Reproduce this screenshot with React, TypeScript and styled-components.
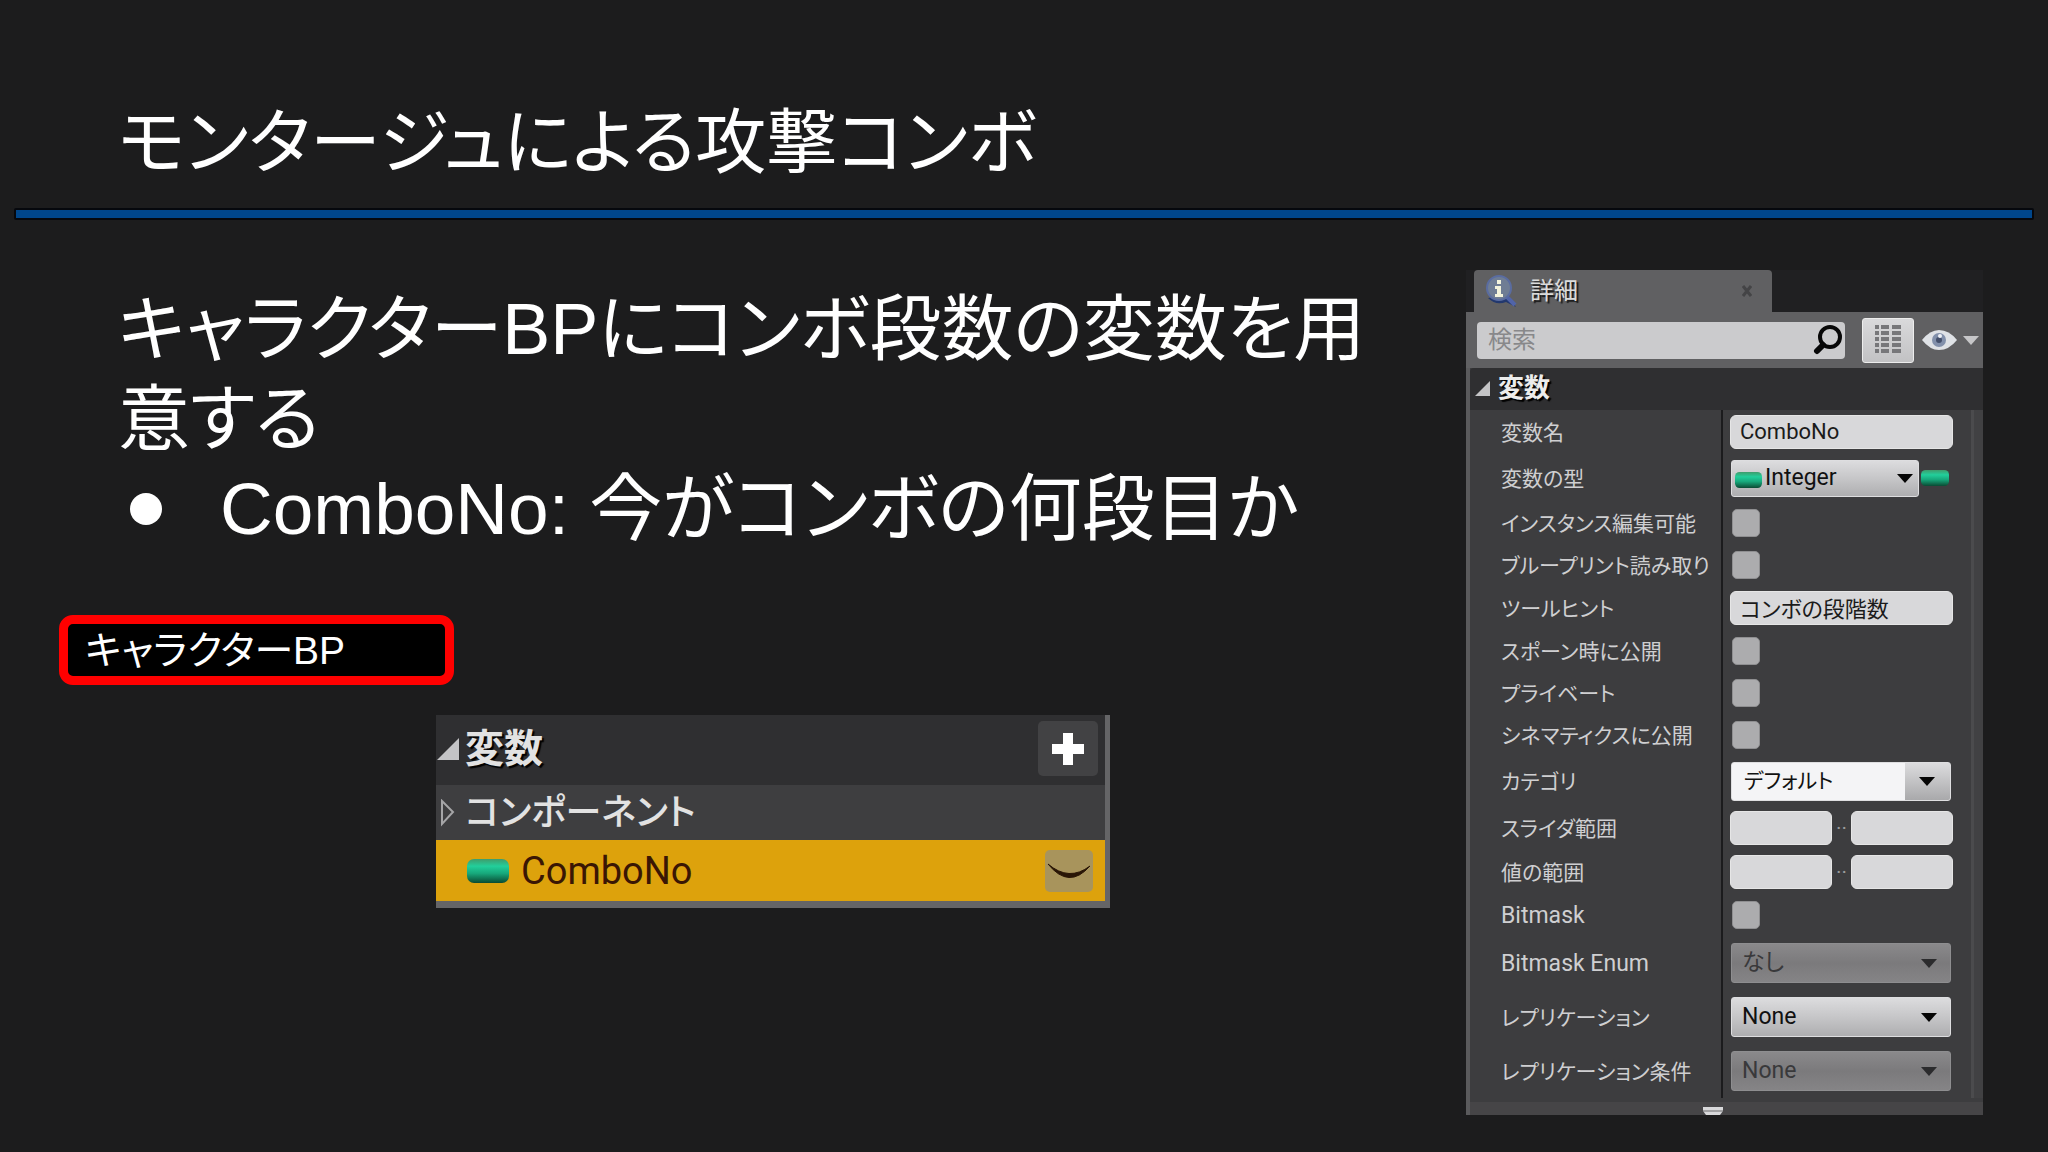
import React from "react";
import styled, { createGlobalStyle, css } from "styled-components";

const GlobalStyle = createGlobalStyle`
  *, *::before, *::after { box-sizing: border-box; }
  body {
    margin: 0;
    background: #1c1c1d;
    color: #fff;
    font-family: "Liberation Sans", "Noto Sans CJK JP", sans-serif;
    font-feature-settings: "palt";
  }
  input, select, button { font: inherit; font-feature-settings: inherit; margin: 0; }
`;

const editorFont = css`
  font-family: Roboto, "Noto Sans CJK JP", sans-serif;
`;

const Slide = styled.div`
  min-height: 100vh;
  display: flex;
  flex-direction: column;
`;

const Header = styled.header`
  padding: 88px 14px 0;
`;

const Title = styled.h1`
  margin: 0 0 10px;
  padding-left: 104px;
  font-size: 71px;
  line-height: 110px;
  font-weight: 400;
`;

const Rule = styled.hr`
  height: 12px;
  margin: 0;
  border: 2px solid #06080d;
  border-radius: 2px;
  background: #00468b;
`;

const Content = styled.main`
  display: grid;
  grid-template-columns: minmax(0, 1fr) 517px;
  align-items: start;
  padding: 50px 65px 0 0;
`;

const Story = styled.section`
  display: flex;
  flex-direction: column;
  align-items: flex-start;
  padding-top: 14px;
`;

const Body = styled.div`
  padding: 0 66px 0 118px;
  font-size: 72px;
  line-height: 90px;
`;

const Paragraph = styled.p`
  margin: 0;
`;

const Bullets = styled.ul`
  margin: 0;
  padding: 0;
  list-style: none;
  font-size: 73px;
`;

const Bullet = styled.li`
  display: flex;
  align-items: center;
  gap: 58px;
  padding-left: 12px;

  &::before {
    content: "";
    width: 32px;
    height: 32px;
    border-radius: 50%;
    background: #fff;
  }
`;

const Badge = styled.div`
  width: 395px;
  margin: 61px 0 30px 59px;
  padding: 1px 17px 0;
  border: 9px solid #f00;
  border-radius: 14px;
  background: #000;
  font-size: 39px;
  line-height: 51px;
`;

const VariableList = styled.section`
  ${editorFont}
  width: 674px;
  margin-left: 436px;
  border: solid #656567;
  border-width: 0 5px 7px 0;
`;

const ListRow = styled.div<{ $tone: "head" | "group" | "active" }>`
  display: flex;
  align-items: center;
  height: ${(p) => (p.$tone === "head" ? 70 : p.$tone === "group" ? 55 : 61)}px;
  padding-right: ${(p) => (p.$tone === "active" ? 12 : 7)}px;
  padding-bottom: ${(p) => (p.$tone === "head" ? 3 : 0)}px;
  padding-left: ${(p) => (p.$tone === "active" ? 31 : 1)}px;
  gap: ${(p) => (p.$tone === "active" ? 12 : 6)}px;
  background: ${(p) => (p.$tone === "head" ? "#2f2f31" : p.$tone === "group" ? "#3e3e40" : "#dda20c")};
  color: ${(p) => (p.$tone === "active" ? "#3a1604" : "#e2e2e2")};
  font-size: ${(p) => (p.$tone === "head" ? 39 : p.$tone === "group" ? 36 : 38)}px;
  font-weight: ${(p) => (p.$tone === "active" ? 400 : p.$tone === "head" ? 700 : 500)};
  line-height: 48px;
  text-shadow: ${(p) => (p.$tone === "head" ? "2px 2px 1px #000" : "none")};
`;

const RowText = styled.span`
  flex: 1;
`;

const ListButton = styled.button<{ $kind: "add" | "eye" }>`
  display: grid;
  place-items: center;
  padding: 0;
  border: 0;
  border-radius: 5px;
  width: ${(p) => (p.$kind === "add" ? 60 : 48)}px;
  height: ${(p) => (p.$kind === "add" ? 55 : 42)}px;
  background: ${(p) => (p.$kind === "add" ? "#424244" : "#a8945c")};
`;

const Details = styled.aside`
  ${editorFont}
  font-size: 21px;
  line-height: 28px;
`;

const TabBar = styled.div`
  padding-left: 8px;
  background: #202022;
`;

const Tab = styled.div`
  display: flex;
  align-items: center;
  width: 298px;
  height: 42px;
  padding: 0 20px 0 10px;
  gap: 12px;
  border-radius: 4px 4px 0 0;
  background: #606062;
  color: #dcdcdc;
  font-size: 24px;
  text-shadow: 2px 2px 1px #1a1a1a;
`;

const CloseButton = styled.button`
  display: grid;
  padding: 0;
  border: 0;
  background: none;
`;

const Toolbar = styled.div`
  display: flex;
  align-items: center;
  height: 56px;
  padding: 0 4px 0 11px;
  background: #606062;
`;

const SearchBox = styled.label`
  display: flex;
  align-items: center;
  flex: 1;
  height: 37px;
  margin-right: 17px;
  padding: 0 2px 0 11px;
  border-radius: 4px;
  background: #cbcbcd;
`;

const SearchInput = styled.input`
  flex: 1;
  min-width: 0;
  padding: 0;
  border: 0;
  outline: 0;
  background: none;
  font-size: 24px;
  line-height: 36px;
  color: #222;

  &::placeholder { color: #88888a; opacity: 1; }
`;

const GridButton = styled.button`
  display: grid;
  place-items: center;
  width: 52px;
  height: 45px;
  margin-right: 8px;
  padding: 0;
  border: 1px solid #ededed;
  border-radius: 3px;
  background: linear-gradient(#d9d9db, #c2c2c4);
`;

const ViewButton = styled.button`
  display: flex;
  align-items: center;
  gap: 6px;
  padding: 0;
  border: 0;
  background: none;
`;

const Pane = styled.div`
  border-left: 4px solid #5a5a5c;
  background: #3d3d3f;
`;

const SectionHead = styled.h2`
  display: flex;
  align-items: center;
  gap: 8px;
  height: 42px;
  margin: 0;
  padding: 0 0 2px 5px;
  border-radius: 4px 0 0 0;
  background: #2f2f31;
  color: #ececec;
  font-size: 26px;
  font-weight: 700;
  text-shadow: 2px 2px 1px #000;
`;

const Scroller = styled.div`
  border-right: 9px solid #414143;
  box-shadow: inset -3px 0 #4b4b4d;
`;

const Field = styled.div<{ $height: number }>`
  display: grid;
  grid-template-columns: 253px minmax(0, 1fr);
  height: ${(p) => p.$height}px;
`;

const FieldLabel = styled.label<{ $latin: boolean }>`
  display: flex;
  align-items: center;
  padding: 1px 0 0 31px;
  border-right: 2px solid #1b1b1d;
  color: #cfcfd1;
  font-size: ${(p) => (p.$latin ? 23 : 21)}px;
  white-space: nowrap;
  overflow: hidden;
`;

const Control = styled.div`
  display: flex;
  align-items: center;
  padding: 0 21px 0 7px;
`;

const TextBox = styled.input`
  flex: 1;
  width: 100%;
  min-width: 0;
  height: 34px;
  padding: 0 9px 2px;
  border: 1px solid #e6e6e6;
  border-radius: 6px;
  background: #d8d8da;
  color: #1b1b1b;
  font-size: 22px;
`;

const RangeGap = styled.span`
  width: 19px;
  color: #9b9b9d;
  line-height: 20px;
  text-align: center;
`;

const CheckBox = styled.input.attrs({ type: "checkbox" })`
  appearance: none;
  width: 28px;
  height: 28px;
  margin-left: 2px;
  border: 1px solid #8f8f91;
  border-radius: 5px;
  background: #acacae;
`;

const SelectWrap = styled.div<{ $width?: number }>`
  position: relative;
  flex: ${(p) => (p.$width ? "none" : "1")};
  width: ${(p) => (p.$width ? p.$width + "px" : "auto")};
  margin: 0 2px 0 1px;
`;

type Look = "plain" | "type" | "combo";

const Select = styled.select<{ $look: Look }>`
  appearance: none;
  display: block;
  width: 100%;
  height: ${(p) => (p.$look === "plain" ? 40 : p.$look === "combo" ? 39 : 37)}px;
  padding: 0 30px 0 ${(p) => (p.$look === "type" ? 33 : p.$look === "combo" ? 12 : 10)}px;
  border: 1px solid #dedee0;
  border-radius: 3px;
  color: #111;
  opacity: 1;
  font-size: ${(p) => (p.$look === "combo" ? 21 : 23)}px;
  background: ${(p) =>
    p.$look === "combo"
      ? "linear-gradient(90deg, #f4f4f6 173px, transparent 173px), linear-gradient(#dcdcde, #a9a9ab)"
      : "linear-gradient(#dcdcde, #c6c6c8 50%, #aeaeb0)"};

  &:disabled {
    border-color: #8e8e90;
    background: linear-gradient(#8a898b, #7b7a7c 50%, #858486);
    color: #39393b;
  }
`;

const SelectArrow = styled.svg<{ $right: number }>`
  position: absolute;
  right: ${(p) => p.$right}px;
  top: 50%;
  margin-top: -4px;
  pointer-events: none;
`;

const SelectPill = styled.span`
  position: absolute;
  left: 4px;
  top: 12px;
  display: grid;
  pointer-events: none;
`;

const Footer = styled.div`
  display: flex;
  align-items: flex-end;
  justify-content: center;
  height: 17px;
  padding-right: 27px;
  border-top: 4px solid #3d3d3f;
  background: #464547;
`;

function Pill({ width, height, id }: { width: number; height: number; id: string }) {
  return (
    <svg width={width} height={height} viewBox="0 0 42 24" preserveAspectRatio="none" aria-hidden="true">
      <defs>
        <linearGradient id={id} x1="0" y1="0" x2="0" y2="1">
          <stop offset="0" stopColor="#3f9c6c" />
          <stop offset="0.3" stopColor="#22cf9b" />
          <stop offset="0.6" stopColor="#17a87b" />
          <stop offset="1" stopColor="#0a4a33" />
        </linearGradient>
      </defs>
      <rect width="42" height="24" rx="7" fill={`url(#${id})`} />
    </svg>
  );
}

function Expanded({ size }: { size: number }) {
  return (
    <svg width={size} height={size} viewBox="0 0 20 20" aria-hidden="true">
      <path d="M20 0V20H0Z" fill="#c4c4c6" />
    </svg>
  );
}

function Dropdown({ look = "plain", value, id, disabled, width }: {
  look?: Look; value: string; id: string; disabled?: boolean; width?: number;
}) {
  return (
    <SelectWrap $width={width}>
      <Select id={id} $look={look} disabled={disabled} defaultValue={value}>
        <option>{value}</option>
      </Select>
      {look === "type" && <SelectPill><Pill width={27} height={16} id="typePill" /></SelectPill>}
      <SelectArrow $right={look === "type" ? 6 : look === "combo" ? 16 : 14} width="16" height="9" viewBox="0 0 16 9" aria-hidden="true">
        <path d="M0 0H16L8 9Z" fill={disabled ? "#2b2b2d" : "#050505"} />
      </SelectArrow>
    </SelectWrap>
  );
}

type Kind = "text" | "type" | "check" | "combo" | "range" | "select";
const rowHeight: Record<Kind, number> = { text: 44, type: 48, check: 42, combo: 50, range: 44, select: 54 };

const fields: { label: string; kind: Kind; value?: string; disabled?: boolean; latin?: boolean }[] = [
  { label: "変数名", kind: "text", value: "ComboNo" },
  { label: "変数の型", kind: "type", value: "Integer" },
  { label: "インスタンス編集可能", kind: "check" },
  { label: "ブループリント読み取り", kind: "check" },
  { label: "ツールヒント", kind: "text", value: "コンボの段階数" },
  { label: "スポーン時に公開", kind: "check" },
  { label: "プライベート", kind: "check" },
  { label: "シネマティクスに公開", kind: "check" },
  { label: "カテゴリ", kind: "combo", value: "デフォルト" },
  { label: "スライダ範囲", kind: "range" },
  { label: "値の範囲", kind: "range" },
  { label: "Bitmask", kind: "check", latin: true },
  { label: "Bitmask Enum", kind: "select", value: "なし", disabled: true, latin: true },
  { label: "レプリケーション", kind: "select", value: "None" },
  { label: "レプリケーション条件", kind: "select", value: "None", disabled: true },
];

export default function App() {
  return (
    <>
      <GlobalStyle />
      <Slide>
        <Header>
          <Title>モンタージュによる攻撃コンボ</Title>
          <Rule />
        </Header>
        <Content>
          <Story>
            <Body>
              <Paragraph>キャラクターBPにコンボ段数の変数を用意する</Paragraph>
              <Bullets>
                <Bullet>ComboNo: 今がコンボの何段目か</Bullet>
              </Bullets>
            </Body>
            <Badge>キャラクターBP</Badge>
            <VariableList>
              <ListRow $tone="head">
                <Expanded size={22} />
                <RowText>変数</RowText>
                <ListButton $kind="add" aria-label="変数を追加">
                  <svg width="34" height="34" viewBox="0 0 34 34" aria-hidden="true">
                    <path d="M12 1h10v11h11v10H22v11H12V22H1V12h11Z" fill="#fff" />
                  </svg>
                </ListButton>
              </ListRow>
              <ListRow $tone="group">
                <svg width="22" height="28" viewBox="0 0 22 28" aria-hidden="true">
                  <path d="M5 2L16 13L5 25Z" fill="none" stroke="#a5a5a7" strokeWidth="2" />
                </svg>
                <RowText>コンポーネント</RowText>
              </ListRow>
              <ListRow $tone="active">
                <Pill width={42} height={24} id="listPill" />
                <RowText>ComboNo</RowText>
                <ListButton $kind="eye" aria-label="公開">
                  <svg width="44" height="20" viewBox="0 0 44 20" aria-hidden="true">
                    <path d="M1 3Q22 21 43 5Q22 29 1 3Z" fill="#2a1606" stroke="#2a1606" strokeWidth="1" />
                  </svg>
                </ListButton>
              </ListRow>
            </VariableList>
          </Story>

          <Details>
            <TabBar>
              <Tab>
                <svg width="34" height="34" viewBox="0 0 34 34" aria-hidden="true">
                  <path d="M4 24Q12 32 22 28L32 33L24 21Z" fill="#22386e" />
                  <path d="M21 21L31 31" stroke="#5164a8" strokeWidth="4" />
                  <circle cx="15" cy="14" r="12" fill="#6f7d94" stroke="#5a6ca0" strokeWidth="2" />
                  <path d="M13 6h4v4h-4ZM11 12h6v8h2v3h-8v-3h2v-5h-2Z" fill="#f3f3dc" />
                </svg>
                <RowText>詳細</RowText>
                <CloseButton aria-label="閉じる">
                  <svg width="10" height="12" viewBox="0 0 10 12" aria-hidden="true">
                    <path d="M1 1L9 11M9 1L1 11" stroke="#444446" strokeWidth="3" />
                  </svg>
                </CloseButton>
              </Tab>
            </TabBar>
            <Toolbar>
              <SearchBox>
                <SearchInput placeholder="検索" aria-label="検索" />
                <svg width="30" height="32" viewBox="0 0 30 32" aria-hidden="true">
                  <circle cx="17" cy="13" r="10" fill="none" stroke="#080808" strokeWidth="4" />
                  <path d="M10 21L4 27" stroke="#080808" strokeWidth="6" strokeLinecap="round" />
                </svg>
              </SearchBox>
              <GridButton aria-label="表示形式">
                <svg width="28" height="30" viewBox="0 0 28 30" aria-hidden="true">
                  {[1, 7, 13, 19, 25].map((y) => (
                    <path key={y} d={`M1 ${y + 1}h4M7 ${y + 1}h8M18 ${y + 1}h9`} stroke="#77777a" strokeWidth="4" />
                  ))}
                </svg>
              </GridButton>
              <ViewButton aria-label="表示オプション">
                <svg width="35" height="22" viewBox="0 0 35 22" aria-hidden="true">
                  <path d="M0 11Q8 1 17 1Q27 1 35 11Q27 21 17 21Q8 21 0 11Z" fill="#dfe2e6" />
                  <circle cx="17" cy="11" r="7" fill="#8290ab" />
                  <circle cx="17" cy="11" r="3" fill="#434f6b" />
                  <circle cx="18" cy="7" r="2" fill="#eef1f6" />
                </svg>
                <svg width="16" height="9" viewBox="0 0 16 9" aria-hidden="true">
                  <path d="M0 0H16L8 9Z" fill="#c6c6c8" />
                </svg>
              </ViewButton>
            </Toolbar>
            <Pane>
              <SectionHead>
                <Expanded size={15} />
                変数
              </SectionHead>
              <Scroller>
                {fields.map(({ label, kind, value, disabled, latin }, i) => {
                  const id = `field-${i}`;
                  return (
                    <Field key={label} $height={rowHeight[kind]}>
                      <FieldLabel htmlFor={id} $latin={!!latin}>{label}</FieldLabel>
                      <Control>
                        {kind === "text" && <TextBox id={id} defaultValue={value} />}
                        {kind === "check" && <CheckBox id={id} />}
                        {kind === "type" && (
                          <>
                            <Dropdown id={id} look="type" value={value!} width={188} />
                            <Pill width={28} height={16} id="sidePill" />
                          </>
                        )}
                        {kind === "combo" && <Dropdown id={id} look="combo" value={value!} />}
                        {kind === "select" && <Dropdown id={id} value={value!} disabled={disabled} />}
                        {kind === "range" && (
                          <>
                            <TextBox id={id} aria-label={`${label} 最小`} />
                            <RangeGap>··</RangeGap>
                            <TextBox aria-label={`${label} 最大`} />
                          </>
                        )}
                      </Control>
                    </Field>
                  );
                })}
              </Scroller>
              <Footer>
                <svg width="20" height="8" viewBox="0 0 20 8" aria-hidden="true">
                  <path d="M0 0H20V4L17 8H3L0 4Z" fill="#d8d8da" />
                  <path d="M0 4H20" stroke="#6a6a6c" strokeWidth="1" />
                </svg>
              </Footer>
            </Pane>
          </Details>
        </Content>
      </Slide>
    </>
  );
}
